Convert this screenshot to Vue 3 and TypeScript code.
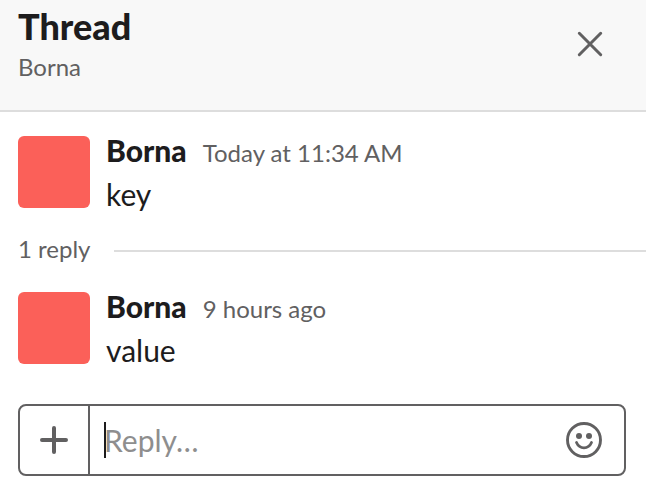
<script setup lang="ts">
import { ref } from 'vue'

interface Message {
  id: number
  author: string
  time: string
  text: string
}

const root: Message = { id: 1, author: 'Borna', time: 'Today at 11:34 AM', text: 'key' }
const replies: Message[] = [{ id: 2, author: 'Borna', time: '9 hours ago', text: 'value' }]
const draft = ref('')
</script>

<template>
  <section class="thread">
    <header class="header">
      <div>
        <h1 class="title">Thread</h1>
        <p class="subtitle">Borna</p>
      </div>
      <button class="icon-button close" type="button" aria-label="Close">
        <svg width="28" height="28" viewBox="0 0 28 28" fill="none" stroke="currentColor" stroke-width="3" stroke-linecap="round">
          <path d="M3.3 3.3 24.7 24.7M24.7 3.3 3.3 24.7" />
        </svg>
      </button>
    </header>

    <main class="messages">
      <article class="message">
        <div class="avatar"></div>
        <div>
          <div class="meta">
            <span class="author">{{ root.author }}</span>
            <time class="time">{{ root.time }}</time>
          </div>
          <p class="text">{{ root.text }}</p>
        </div>
      </article>

      <div class="divider">
        <span class="count">{{ replies.length }} reply</span>
        <span class="rule"></span>
      </div>

      <article v-for="reply in replies" :key="reply.id" class="message">
        <div class="avatar"></div>
        <div>
          <div class="meta">
            <span class="author">{{ reply.author }}</span>
            <time class="time">{{ reply.time }}</time>
          </div>
          <p class="text">{{ reply.text }}</p>
        </div>
      </article>
    </main>

    <form class="composer" @submit.prevent>
      <button class="icon-button attach" type="button" aria-label="Attach">
        <svg width="28" height="28" viewBox="0 0 28 28" fill="none" stroke="currentColor" stroke-width="4" stroke-linecap="round">
          <path d="M14 2V26M2 14H26" />
        </svg>
      </button>
      <div class="entry">
        <span v-if="!draft" class="caret"></span>
        <input v-model="draft" class="field" type="text" placeholder="Reply…" aria-label="Reply" />
      </div>
      <button class="icon-button emoji" type="button" aria-label="Emoji">
        <svg width="36" height="36" viewBox="0 0 36 36" fill="none" stroke="currentColor" stroke-linecap="round">
          <circle cx="18" cy="18" r="16.5" stroke-width="2.9" />
          <circle cx="13" cy="14" r="3" fill="currentColor" stroke="none" />
          <circle cx="23" cy="14" r="3" fill="currentColor" stroke="none" />
          <path d="M10.5 20.5C12 24 14.6 25.8 18 25.8S24 24 25.5 20.5" stroke-width="2.8" />
        </svg>
      </button>
    </form>
  </section>
</template>

<style>
body {
  margin: 0;
  background: #fff;
}
</style>

<style scoped>
.thread {
  color: #1d1c1d;
  font-family: Lato, sans-serif;
}

.header {
  display: flex;
  justify-content: space-between;
  align-items: flex-start;
  padding: 4px 36px 24px 18px;
  background: #f8f8f8;
  border-bottom: 2px solid #ddd;
}

.title {
  margin: 0;
  font-size: 36px;
  font-weight: 900;
  line-height: 44px;
}

.subtitle {
  margin: 0;
  color: #616061;
  font-size: 24px;
  line-height: 38px;
}

.icon-button {
  display: flex;
  align-items: center;
  justify-content: center;
  flex: none;
  padding: 0;
  border: 0;
  background: none;
  color: #616061;
  cursor: pointer;
}

.close {
  width: 40px;
  height: 40px;
  margin-top: 20px;
}

.messages {
  padding: 24px 0 0 18px;
}

.message {
  display: flex;
  gap: 16px;
}

.avatar {
  flex: none;
  width: 72px;
  height: 72px;
  border-radius: 6px;
  background: #fb6059;
}

.meta {
  display: flex;
  align-items: baseline;
  gap: 16px;
  height: 28px;
  line-height: 28px;
}

.author {
  font-size: 30px;
  font-weight: 900;
}

.time {
  color: #616061;
  font-size: 24px;
}

.text {
  margin: 8px 0 0;
  font-size: 30px;
  line-height: 44px;
}

.divider {
  display: flex;
  align-items: center;
  gap: 24px;
  margin: 19px 0 25px;
}

.count {
  padding-bottom: 4px;
  color: #616061;
  font-size: 24px;
  line-height: 28px;
}

.rule {
  flex: 1;
  height: 2px;
  background: #ddd;
}

.composer {
  display: flex;
  align-items: center;
  height: 68px;
  margin: 32px 20px 14px 18px;
  border: 2px solid #616061;
  border-radius: 8px;
}

.attach {
  align-self: stretch;
  width: 70px;
  border-right: 2px solid #616061;
}

.entry {
  position: relative;
  display: flex;
  align-items: center;
  flex: 1;
  min-width: 0;
  margin-left: 14px;
}

.caret {
  position: absolute;
  left: 0;
  width: 2px;
  height: 36px;
  background: #1d1c1d;
}

.field {
  flex: 1;
  min-width: 0;
  height: 44px;
  padding: 0;
  border: 0;
  outline: 0;
  background: none;
  color: inherit;
  font-family: inherit;
  font-size: 30px;
}

.field::placeholder {
  color: #8e8e8e;
  opacity: 1;
}

.emoji {
  width: 36px;
  height: 36px;
  margin-right: 22px;
}
</style>
